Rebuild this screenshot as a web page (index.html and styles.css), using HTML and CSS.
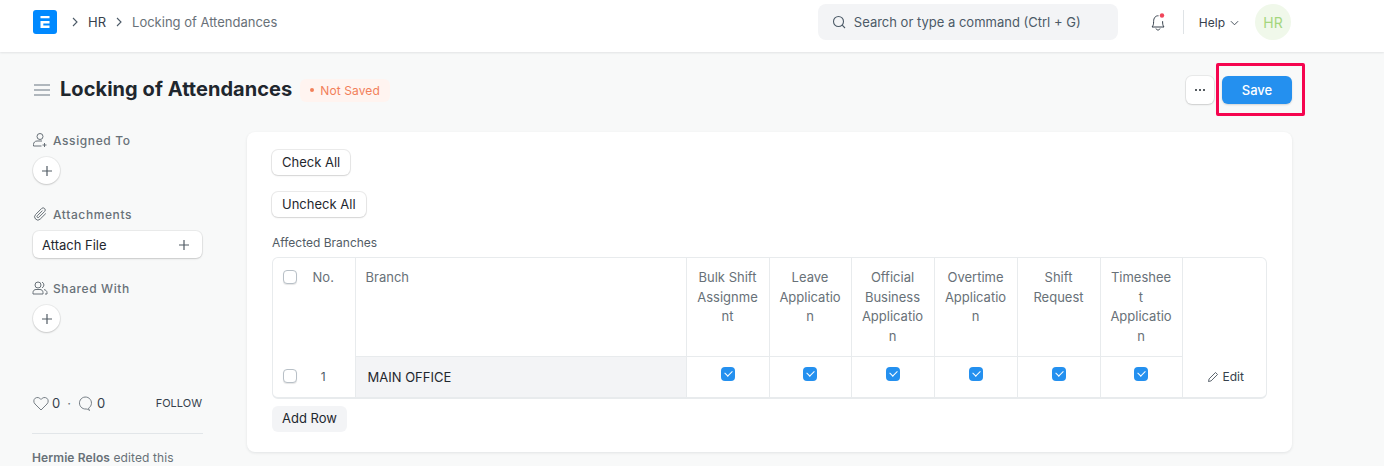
FILE: index.html
```html
<!DOCTYPE html>
<html lang="en">
<head>
<meta charset="utf-8">
<title>Locking of Attendances</title>
<link rel="stylesheet" href="styles.css">
</head>
<body>
<header class="navbar">
  <svg class="logo" viewBox="0 0 24 24"><rect width="24" height="24" rx="3" fill="#0089ff"/><path d="M7.500 6h9v2.200h-9zM7.500 11h9v2.600h-6.200v1.800h6.200V18h-9z" fill="#fff"/></svg>
  <svg class="chev" viewBox="0 0 8 10"><path d="M2 1l4 4-4 4" fill="none" stroke="#4c5a67" stroke-width="1.100"/></svg>
  <a class="crumb">HR</a>
  <svg class="chev chev-b" viewBox="0 0 8 10"><path d="M2 1l4 4-4 4" fill="none" stroke="#4c5a67" stroke-width="1.100"/></svg>
  <span class="crumb-current">Locking of Attendances</span>
  <div class="search">
    <svg class="search-icon" viewBox="0 0 14 14"><circle cx="6.500" cy="6.500" r="5" fill="none" stroke="#4c5a67" stroke-width="1.100"/><path d="M10.200 10.200L13 13" stroke="#4c5a67" stroke-width="1.100"/></svg>
    <span>Search or type a command (Ctrl + G)</span>
  </div>
  <div class="bell">
    <svg viewBox="0 0 18 20"><path d="M9.500 3.800C6.500 3.500 4.600 6 4.600 9.500c0 2.500-.2 4.100-1.600 5.500h12c-1.200-1.400-1.400-3-1.400-5.800" fill="none" stroke="#36414c" stroke-width="1"/><path d="M7 16.500c.3 1 1 1.500 2 1.500s1.700-.5 2-1.500" fill="none" stroke="#36414c" stroke-width="1"/><circle cx="13" cy="3.500" r="2.200" fill="#f0455a"/></svg>
  </div>
  <span class="nav-divider"></span>
  <div class="help">Help
    <svg viewBox="0 0 10 6"><path d="M1 1l4 4 4-4" fill="none" stroke="#36414c" stroke-width="1"/></svg>
  </div>
  <div class="avatar">HR</div>
</header>

<div class="page-head">
  <svg class="menu-icon" viewBox="0 0 16 12"><path d="M0 1h16M0 6h16M0 11h16" stroke="#98a1a9" stroke-width="1.500"/></svg>
  <h1>Locking of Attendances</h1>
  <span class="badge"><i></i>Not Saved</span>
  <div class="actions">
    <button class="btn-more"><svg viewBox="0 0 10 2"><circle cx="1" cy="1" r="1" fill="#1f272e"/><circle cx="5" cy="1" r="1" fill="#1f272e"/><circle cx="9" cy="1" r="1" fill="#1f272e"/></svg></button>
    <button class="btn-save">Save</button>
    <span class="highlight"></span>
  </div>
</div>

<div class="content">
  <aside class="sidebar">
    <section class="side-section">
      <div class="side-label"><svg viewBox="0 0 16 16"><circle cx="8" cy="4.500" r="3" fill="none" stroke="#687178"/><path d="M1.500 14v-1.500c0-2 1.500-3.500 3.500-3.500h5M1.500 14h8M12.500 11v4M10.500 13h4" fill="none" stroke="#687178"/></svg>Assigned To</div>
      <button class="circle-btn"><svg viewBox="0 0 12 12"><path d="M6 1v10M1 6h10" stroke="#525c65" stroke-width="1.200"/></svg></button>
    </section>
    <section class="side-section">
      <div class="side-label"><svg viewBox="0 0 16 16"><path d="M13.800 7.500l-5.600 5.600a3.200 3.200 0 0 1-4.600-4.600l6-6a2.100 2.100 0 0 1 3 3l-5.800 5.800a1 1 0 0 1-1.500-1.500l5.200-5.200" fill="none" stroke="#687178"/></svg>Attachments</div>
      <button class="attach-btn">Attach File<svg viewBox="0 0 12 12"><path d="M6 1v10M1 6h10" stroke="#525c65" stroke-width="1.200"/></svg></button>
    </section>
    <section class="side-section">
      <div class="side-label"><svg viewBox="0 0 16 16"><circle cx="6" cy="5" r="3" fill="none" stroke="#687178"/><path d="M1 14v-1.500C1 10.500 2.500 9.500 4 9.500h4c1.500 0 3 1 3 3V14H1zM10 2.200a3 3 0 0 1 0 5.600M12 9.600c1.700.3 3 1.400 3 3V14h-2" fill="none" stroke="#687178"/></svg>Shared With</div>
      <button class="circle-btn"><svg viewBox="0 0 12 12"><path d="M6 1v10M1 6h10" stroke="#525c65" stroke-width="1.200"/></svg></button>
    </section>
    <div class="social">
      <svg class="ic-heart" viewBox="0 0 16 15"><path d="M8 14L2 8C.3 6.200.5 3.500 2.200 2.200 4 1 6.500 1.300 8 3.500 9.500 1.300 12 1 13.800 2.200c1.700 1.300 1.900 4 .2 5.800L8 14z" fill="none" stroke="#687178" stroke-width=".9"/></svg>
      <span>0</span><span class="dot">·</span>
      <svg class="ic-comment" viewBox="0 0 15 15"><path d="M10.500 12.200a6 6 0 1 0-2.500.8c1 0 2.500.5 3.500 1.500-.3-.8-.8-1.700-1-2.300z" fill="none" stroke="#687178" stroke-width=".9"/></svg>
      <span>0</span>
      <span class="follow">FOLLOW</span>
    </div>
    <div class="activity"><b>Hermie Relos</b> edited this</div>
  </aside>

  <main class="card">
    <button class="btn-default">Check All</button>
    <button class="btn-default btn-uncheck">Uncheck All</button>
    <div class="field-label">Affected Branches</div>
    <div class="grid-wrap">
      <table class="grid">
        <colgroup>
          <col class="c-check"><col class="c-no"><col class="c-branch">
          <col class="c-83"><col class="c-82"><col class="c-83"><col class="c-83"><col class="c-83"><col class="c-82"><col>
        </colgroup>
        <thead>
          <tr>
            <th class="cell-check"><span class="check"></span></th>
            <th class="cell-no">No.</th>
            <th class="cell-branch ruled">Branch</th>
            <th>Bulk Shift Assignment</th>
            <th>Leave Application</th>
            <th>Official Business Application</th>
            <th>Overtime Application</th>
            <th>Shift Request</th>
            <th>Timesheet Application</th>
            <th class="cell-edit" rowspan="2"><span class="edit"><svg viewBox="0 0 12 12"><path d="M1.500 10.500l.6-2.600L8.500 1.500l2 2-6.400 6.400-2.600.6z" fill="none" stroke="#36414c" stroke-width=".8"/></svg>Edit</span></th>
          </tr>
          <tr>
            <td class="cell-check"><span class="check"></span></td>
            <td class="cell-no cell-index">1</td>
            <td class="cell-value">MAIN OFFICE</td>
            <td><span class="checked"></span></td>
            <td><span class="checked"></span></td>
            <td><span class="checked"></span></td>
            <td><span class="checked"></span></td>
            <td><span class="checked"></span></td>
            <td><span class="checked"></span></td>
          </tr>
        </thead>
      </table>
    </div>
    <button class="btn-add">Add Row</button>
  </main>
</div>
</body>
</html>
```
FILE: styles.css
```css
* { box-sizing: border-box; }
html, body { margin: 0; padding: 0; height: 466px; overflow: hidden; }
body { background: #f8f9f9; font-family: Inter, "Liberation Sans", sans-serif; font-size: 13px; color: #1f272e; }
button { font-family: inherit; cursor: pointer; }

.navbar { height: 52px; background: #fff; display: flex; align-items: center; padding: 0 93px 0 33px; box-shadow: 0 1px 2px rgba(25, 39, 52, .1); position: relative; }
.logo { width: 24px; height: 24px; margin-top: -8px; }
.chev { width: 8px; height: 10px; margin-left: 14px; margin-top: -1px; }
.chev-b { margin-left: 9px; }
.crumb { margin-left: 9px; color: #36414c; }
.crumb-current { margin-left: 9px; color: #687178; }
.search { width: 300px; height: 36px; margin-left: auto; margin-top: -8px; background: #f3f4f6; border-radius: 8px; display: flex; align-items: center; padding-left: 14px; color: #4c5a67; }
.search-icon { width: 14px; height: 14px; margin-right: 8px; }
.bell { width: 18px; height: 20px; margin-left: 31px; margin-top: -8px; }
.bell svg { width: 18px; height: 20px; display: block; }
.nav-divider { width: 1px; height: 24px; background: #dfe3e6; margin-left: 16px; margin-top: -8px; }
.help { margin-left: 15px; margin-top: -8px; display: flex; align-items: center; gap: 5px; color: #36414c; font-size: 12px; }
.help svg { width: 9px; height: 6px; margin-top: 2px; }
.avatar { width: 36px; height: 36px; border-radius: 50%; background: #f0f8ea; color: #a4d67e; font-size: 14px; display: flex; align-items: center; justify-content: center; margin-left: 16px; margin-top: -8px; }
.navbar > .crumb, .navbar > .crumb-current, .navbar > .chev { position: relative; top: -4px; }

.page-head { display: flex; align-items: center; height: 76px; padding: 0 92px 0 34px; }
.menu-icon { width: 16px; height: 12px; margin-right: 10px; margin-top: -1px; }
h1 { margin: 0; font-size: 20px; font-weight: 700; line-height: 28px; margin-top: -3px; letter-spacing: .05px; }
.badge { margin-left: 8px; height: 23px; padding: 0 10px; background: #fff4f0; color: #f2805a; border-radius: 6px; font-size: 12px; letter-spacing: .1px; display: flex; align-items: center; }
.badge i { width: 4px; height: 4px; border-radius: 50%; background: #f2805a; margin-right: 6px; }
.actions { margin-left: auto; display: flex; gap: 8px; position: relative; }
.btn-more { width: 28px; height: 28px; border: 0; border-radius: 6px; background: #fff; box-shadow: 0 0 0 1px rgba(0, 0, 0, .06), 0 1px 2px rgba(0, 0, 0, .12); padding: 0; display: flex; align-items: center; justify-content: center; }
.btn-more svg { width: 10px; height: 2px; }
.btn-save { width: 70px; height: 28px; border: 0; border-radius: 6px; background: #2490ef; color: #fff; font-size: 13px; font-weight: 500; box-shadow: 0 1px 2px rgba(0, 0, 0, .15); }
.highlight { position: absolute; left: 30px; top: -13px; width: 89px; height: 53px; border: 3px solid #f5054f; border-radius: 2px; }

.content { display: flex; padding: 4px 92px 0 32px; gap: 44px; align-items: flex-start; }
.sidebar { width: 171px; flex: none; margin-top: -2px; }
.side-section { height: 74px; padding-top: 1px; }
.side-label { display: flex; align-items: center; gap: 5px; height: 18px; color: #687178; font-size: 12px; font-weight: 500; letter-spacing: .6px; margin-bottom: 8px; }
.side-label svg { width: 16px; height: 16px; }
.circle-btn { width: 27px; height: 27px; margin: 2px 0 0 1px; border: 0; padding: 0; border-radius: 50%; background: #fff; box-shadow: 0 0 0 1px rgba(0, 0, 0, .05), 0 1px 2px rgba(0, 0, 0, .15); display: flex; align-items: center; justify-content: center; }
.circle-btn svg, .attach-btn svg { width: 12px; height: 12px; }
.attach-btn { width: 169px; height: 27px; margin: 2px 0 0 1px; border: 0; padding: 0 12px 0 9px; border-radius: 6px; background: #fff; color: #1f272e; font-size: 13px; display: flex; align-items: center; justify-content: space-between; box-shadow: 0 0 0 1px rgba(0, 0, 0, .05), 0 1px 2px rgba(0, 0, 0, .15); }
.social { display: flex; align-items: center; margin-top: 41px; height: 20px; color: #36414c; font-size: 13px; }
.ic-heart { width: 16px; height: 15px; margin-left: 1px; margin-right: 3px; }
.dot { margin: 0 7px; color: #687178; }
.ic-comment { width: 15px; height: 15px; margin-right: 4px; }
.follow { margin-left: auto; margin-right: 1px; font-size: 11px; color: #36414c; }
.activity { margin-top: 20px; padding-top: 16px; border-top: 1px solid #e2e6e9; font-size: 12px; color: #687178; letter-spacing: .1px; line-height: 16px; }
.activity b { font-weight: 600; }

.card { flex: 1; height: 320px; background: #fff; border-radius: 8px; box-shadow: 0 1px 3px rgba(25, 39, 52, .1); padding: 18px 25px 0; display: flex; flex-direction: column; align-items: flex-start; }
.btn-default { height: 25px; padding: 0 10px 2px; border: 0; border-radius: 6px; background: #fff; color: #1f272e; font-size: 13px; box-shadow: 0 0 0 1px rgba(0, 0, 0, .08), 0 1px 2px rgba(0, 0, 0, .1); }
.btn-uncheck { margin-top: 17px; }
.field-label { margin-top: 18px; font-size: 12px; line-height: 16px; color: #525c65; }
.grid-wrap { margin-top: 6px; width: 995px; height: 142px; border: 1px solid #e8ebed; border-bottom-width: 2px; border-radius: 6px; overflow: hidden; }
.grid { width: 993px; table-layout: fixed; border-collapse: collapse; }
.c-check { width: 34px; }
.c-no { width: 48px; }
.c-branch { width: 331px; }
.c-83 { width: 83px; }
.c-82 { width: 82px; }
.grid th, .grid td { font-weight: 400; font-size: 13px; line-height: 19.600px; padding: 10px 9px 10px; text-align: center; vertical-align: top; color: #687178; overflow-wrap: break-word; border-left: 1px solid #e8ebed; }
.grid tr + tr td { border-top: 1px solid #e8ebed; height: 41px; padding: 8px 9px 0; }
.grid .cell-check { border-left: 0; padding: 12px 0 0 10px; text-align: left; }
.grid .cell-no { border-left: 0; padding-left: 0; padding-right: 15px; }
.grid tr + tr .cell-check { border-top: 0; padding: 12px 0 0 10px; }
.grid tr + tr .cell-no { border-top: 0; padding-right: 15px; padding-top: 10px; }
.grid .cell-branch { text-align: left; padding-left: 10px; }
.grid .cell-index { color: #4c5a67; font-size: 12px; }
.grid tr + tr .cell-value { text-align: left; background: #f3f4f6; color: #1f272e; padding: 11px 12px 0 12px; }
.grid .cell-edit { vertical-align: bottom; padding: 0 0 9px 2px; }
.edit { display: inline-flex; align-items: center; gap: 4px; color: #36414c; font-size: 12px; }
.edit svg { width: 12px; height: 12px; }
.check { display: block; width: 14px; height: 14px; background: #fff; border: 1px solid #b8c0c7; border-radius: 4px; box-shadow: 0 1px 1px rgba(0, 0, 0, .1); }
.checked { display: block; width: 14px; height: 14px; margin: 2px auto 0; border-radius: 4px; background: #2490ef; position: relative; }
.checked::after { content: ""; position: absolute; left: 4px; top: 3px; width: 6px; height: 4px; border-left: 1.500px solid #fff; border-bottom: 1.500px solid #fff; transform: rotate(-45deg); }
.btn-add { margin-top: 7px; height: 26px; padding: 0 10px 2px; border: 0; border-radius: 6px; background: #f3f4f6; color: #1f272e; font-size: 13px; }
```
